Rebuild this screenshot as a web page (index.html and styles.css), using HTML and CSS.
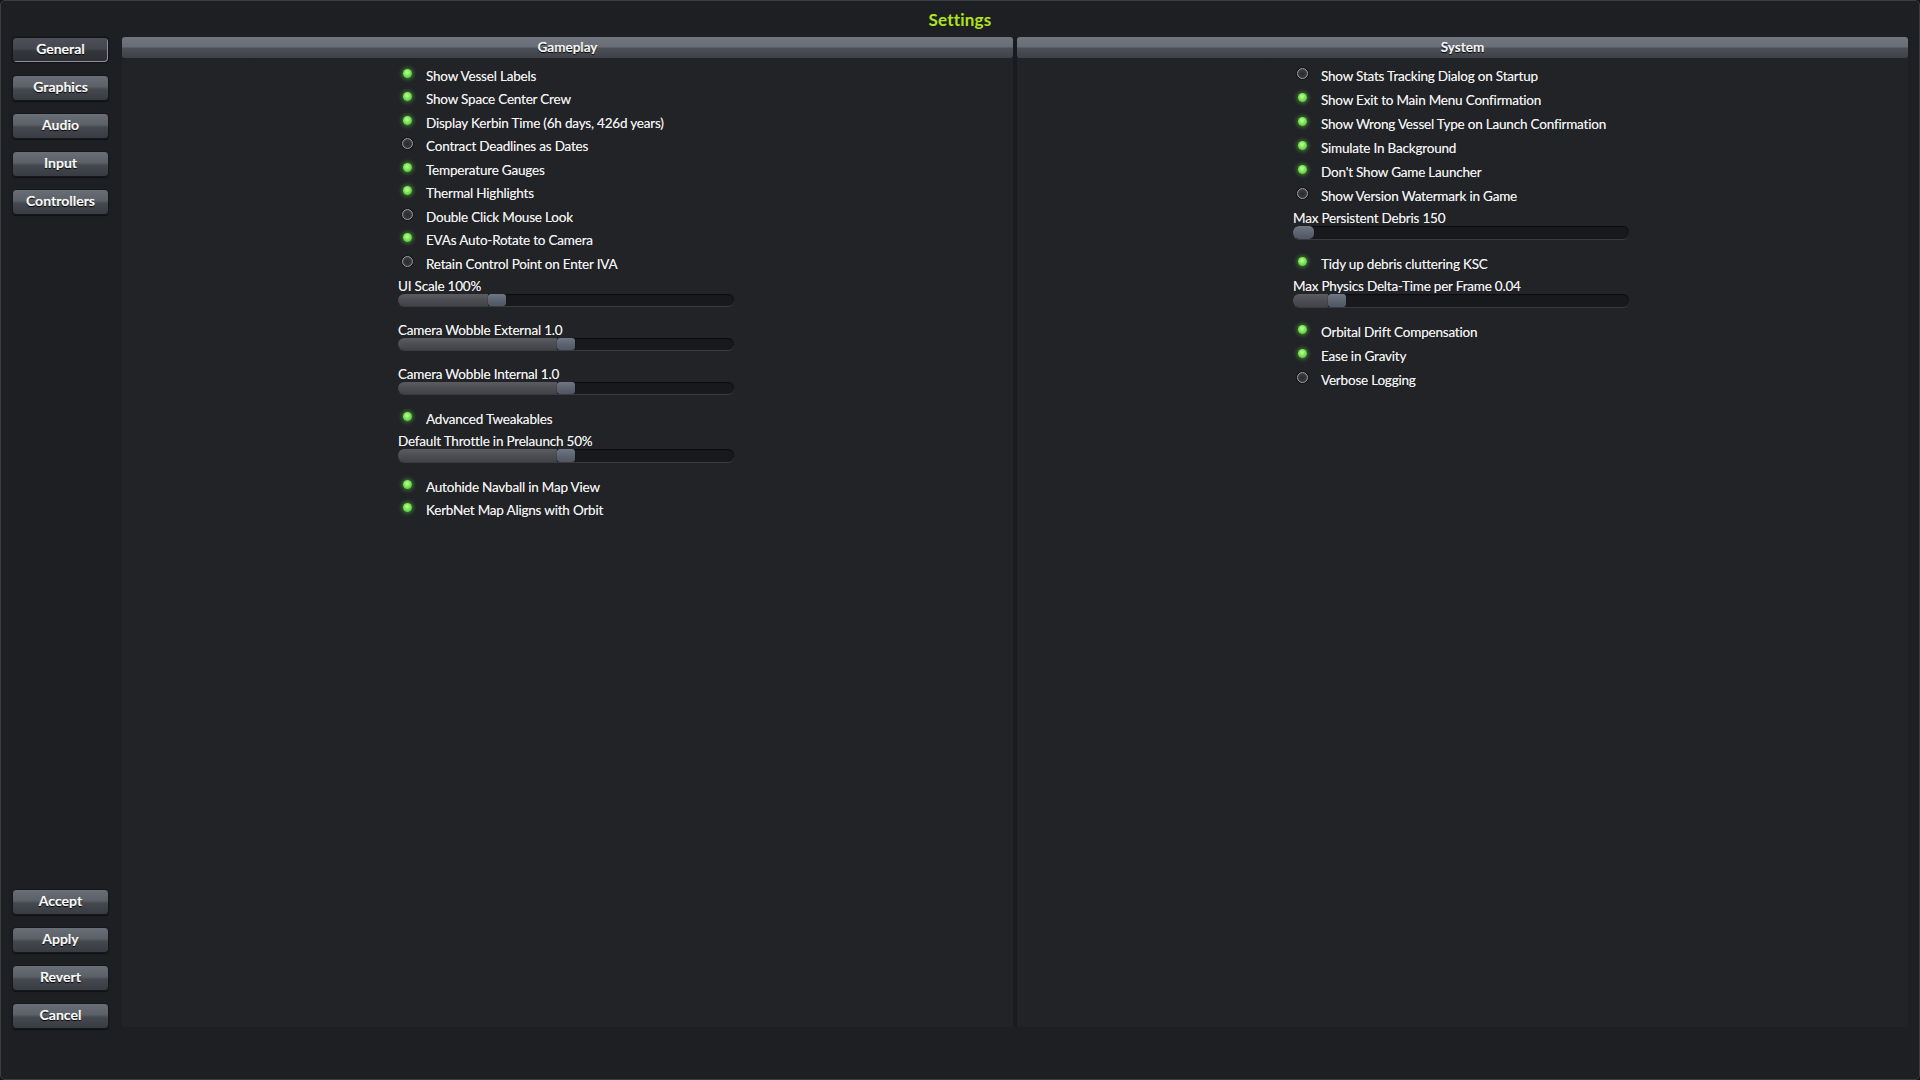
FILE: index.html
```html
<!DOCTYPE html>
<html>
<head>
<meta charset="utf-8">
<title>Settings</title>
<link rel="stylesheet" href="styles.css">
</head>
<body>
<div class="window">
  <div class="title">Settings</div>
  <div class="main">
    <div class="sidebar">
      <div class="btn-group">
        <div class="btn selected">General</div>
        <div class="btn">Graphics</div>
        <div class="btn">Audio</div>
        <div class="btn">Input</div>
        <div class="btn">Controllers</div>
      </div>
      <div class="btn-group">
        <div class="btn">Accept</div>
        <div class="btn">Apply</div>
        <div class="btn">Revert</div>
        <div class="btn">Cancel</div>
      </div>
    </div>
    <div class="content">
      <div class="column">
        <div class="col-header">Gameplay</div>
        <div class="col-body">
          <div class="row"><span class="led on"></span><span class="label">Show Vessel Labels</span></div>
          <div class="row"><span class="led on"></span><span class="label">Show Space Center Crew</span></div>
          <div class="row"><span class="led on"></span><span class="label">Display Kerbin Time (6h days, 426d years)</span></div>
          <div class="row"><span class="led off"></span><span class="label">Contract Deadlines as Dates</span></div>
          <div class="row"><span class="led on"></span><span class="label">Temperature Gauges</span></div>
          <div class="row"><span class="led on"></span><span class="label">Thermal Highlights</span></div>
          <div class="row"><span class="led off"></span><span class="label">Double Click Mouse Look</span></div>
          <div class="row"><span class="led on"></span><span class="label">EVAs Auto-Rotate to Camera</span></div>
          <div class="row"><span class="led off"></span><span class="label">Retain Control Point on Enter IVA</span></div>
          <div class="slider-block">
            <div class="slider-label">UI Scale 100%</div>
            <div class="slider"><div class="fill" style="width:90px"></div><div class="knob"></div><div class="rest"></div></div>
          </div>
          <div class="slider-block">
            <div class="slider-label">Camera Wobble External 1.0</div>
            <div class="slider"><div class="fill" style="width:159px"></div><div class="knob"></div><div class="rest"></div></div>
          </div>
          <div class="slider-block">
            <div class="slider-label">Camera Wobble Internal 1.0</div>
            <div class="slider"><div class="fill" style="width:159px"></div><div class="knob"></div><div class="rest"></div></div>
          </div>
          <div class="row"><span class="led on"></span><span class="label">Advanced Tweakables</span></div>
          <div class="slider-block">
            <div class="slider-label">Default Throttle in Prelaunch 50%</div>
            <div class="slider"><div class="fill" style="width:159px"></div><div class="knob"></div><div class="rest"></div></div>
          </div>
          <div class="row"><span class="led on"></span><span class="label">Autohide Navball in Map View</span></div>
          <div class="row"><span class="led on"></span><span class="label">KerbNet Map Aligns with Orbit</span></div>
        </div>
      </div>
      <div class="column system">
        <div class="col-header">System</div>
        <div class="col-body">
          <div class="row"><span class="led off"></span><span class="label">Show Stats Tracking Dialog on Startup</span></div>
          <div class="row"><span class="led on"></span><span class="label">Show Exit to Main Menu Confirmation</span></div>
          <div class="row"><span class="led on"></span><span class="label">Show Wrong Vessel Type on Launch Confirmation</span></div>
          <div class="row"><span class="led on"></span><span class="label">Simulate In Background</span></div>
          <div class="row"><span class="led on"></span><span class="label">Don't Show Game Launcher</span></div>
          <div class="row"><span class="led off"></span><span class="label">Show Version Watermark in Game</span></div>
          <div class="slider-block">
            <div class="slider-label">Max Persistent Debris 150</div>
            <div class="slider"><div class="fill" style="width:0px"></div><div class="knob wide"></div><div class="rest"></div></div>
          </div>
          <div class="row"><span class="led on"></span><span class="label">Tidy up debris cluttering KSC</span></div>
          <div class="slider-block">
            <div class="slider-label">Max Physics Delta-Time per Frame 0.04</div>
            <div class="slider"><div class="fill" style="width:35px"></div><div class="knob"></div><div class="rest"></div></div>
          </div>
          <div class="row"><span class="led on"></span><span class="label">Orbital Drift Compensation</span></div>
          <div class="row"><span class="led on"></span><span class="label">Ease in Gravity</span></div>
          <div class="row"><span class="led off"></span><span class="label">Verbose Logging</span></div>
        </div>
      </div>
    </div>
  </div>
</div>
</body>
</html>
```
FILE: styles.css
```css
* { box-sizing: border-box; }
html, body {
  margin: 0;
  padding: 0;
  width: 1920px;
  height: 1080px;
  background: #141518;
  overflow: hidden;
}
body {
  font-family: Lato, "Open Sans", sans-serif;
  color: #f2f2f2;
}
.window {
  width: 1920px;
  height: 1080px;
  border: 1px solid #3b3d42;
  border-radius: 5px;
  background: #1e1f23;
  display: flex;
  flex-direction: column;
}
.title {
  height: 36px;
  display: flex;
  align-items: center;
  justify-content: center;
  padding-top: 1px;
  font-weight: 700;
  font-size: 17px;
  color: #b0e31c;
  letter-spacing: 0.2px;
}
.main {
  display: flex;
  padding-left: 11px;
  padding-right: 11px;
  height: 992px;
}
.sidebar {
  width: 97px;
  margin-right: 13px;
  display: flex;
  flex-direction: column;
  justify-content: space-between;
}
.btn-group {
  display: flex;
  flex-direction: column;
  gap: 12px;
}
.btn {
  height: 26px;
  padding-bottom: 3px;
  border-radius: 4px;
  border: 1px solid #17181b;
  background: linear-gradient(#6a6e76 0%, #5b5f66 45%, #45484f 55%, #383b41 100%);
  display: flex;
  align-items: center;
  justify-content: center;
  font-weight: 700;
  font-size: 14px;
  color: #f8f8f8;
  text-shadow: 0 1px 1px #000, 0 0 0.8px rgba(255,255,255,0.7);
  box-shadow: 0 1px 1px rgba(0,0,0,0.5);
}
.btn.selected {
  background: linear-gradient(#4d5058 0%, #43464d 45%, #34363c 55%, #2c2e33 100%);
  border-color: #141518;
  box-shadow: inset -1px -1px 0 #8d9098, 0 0 1px #000;
}
.content {
  flex: 1;
  height: 990px;
  display: grid;
  grid-template-columns: 1fr 1fr;
  gap: 4px;
  background: #1a1b1e;
}
.column {
  background: #222327;
  display: flex;
  flex-direction: column;
}
.col-header {
  height: 21px;
  padding-bottom: 2px;
  border-radius: 3px;
  background: linear-gradient(#72767f 0%, #686c74 48%, #4d5057 52%, #3e4147 100%);
  display: flex;
  align-items: center;
  justify-content: center;
  font-weight: 700;
  font-size: 13.5px;
  color: #f4f4f4;
  text-shadow: 0 1px 1px #000, 0 0 0.8px rgba(255,255,255,0.6);
}
.col-body {
  width: 336px;
  margin-left: calc(50% - 169.5px);
  padding-top: 6px;
}
.row {
  height: 23.5px;
  display: flex;
  align-items: center;
}
.system .row {
  height: 24px;
}
.led {
  width: 18px;
  height: 18px;
  margin-right: 10px;
  margin-bottom: 5px;
  display: flex;
  align-items: center;
  justify-content: center;
  flex-shrink: 0;
}
.led::before {
  content: "";
  display: block;
  border-radius: 50%;
}
.led.on::before {
  width: 9px;
  height: 9px;
  background: radial-gradient(circle at 45% 40%, #c8ff9a 0%, #78e454 45%, #3fb22a 100%);
  box-shadow: 0 0 4px 1px rgba(90, 220, 60, 0.55);
}
.led.off::before {
  width: 9px;
  height: 9px;
  border: 1px solid #9a9a9e;
  background: radial-gradient(circle at 50% 55%, #2a2a2c 0%, #38383b 55%, #5e5e62 100%);
  box-shadow: 0 0 1px 0.5px rgba(0,0,0,0.8);
}
.label, .slider-label {
  font-size: 13.5px;
  white-space: nowrap;
  letter-spacing: -0.2px;
  text-shadow: 0 0 0.6px rgba(255,255,255,0.6);
}
.slider-block {
  padding-top: 3px;
  padding-bottom: 13.5px;
}
.slider-label {
  height: 15px;
  line-height: 15px;
}
.slider {
  height: 12.5px;
  display: flex;
  border-radius: 6px;
  background: #18191c;
  box-shadow: inset 0 1px 1px #0c0c0e, 0 1px 0 #3a3b40;
  overflow: hidden;
}
.fill {
  background: linear-gradient(#5a5c61 0%, #4c4e53 50%, #414347 100%);
}
.knob {
  width: 18px;
  border-radius: 3px;
  background: linear-gradient(#6f7684 0%, #5d6472 50%, #505663 100%);
  box-shadow: 0 0 1px #000;
  flex-shrink: 0;
}
.knob.wide {
  width: 21px;
  border-radius: 5px;
}
.rest {
  flex: 1;
}
```
